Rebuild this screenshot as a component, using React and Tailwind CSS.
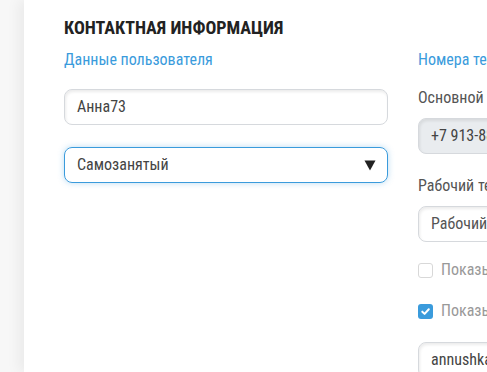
import React from 'react';

const font = { fontFamily: '"Roboto Condensed", Roboto, "Liberation Sans Narrow", sans-serif' };

const Field = ({ value, disabled, className = '' }) => (
  <div
    className={`h-9 w-[324px] shrink-0 rounded-lg border border-[#d6d9dd] px-3 flex items-center text-[16px] text-[#444] shadow-[inset_1px_2px_3px_rgba(0,0,0,0.08)] ${disabled ? 'bg-[#e9ecef]' : 'bg-white'} ${className}`}
  >
    <span className="whitespace-nowrap">{value}</span>
  </div>
);

const Check = ({ checked, label }) => (
  <label className="flex items-center gap-2 text-[16px] leading-5 text-[#999] whitespace-nowrap">
    {checked ? (
      <span className="w-[15px] h-[15px] rounded-[3px] bg-[#3a9bdc] flex items-center justify-center">
        <svg width="11" height="11" viewBox="0 0 12 12">
          <path d="M2.5 6.2 L5 8.6 L9.6 3.6" fill="none" stroke="white" strokeWidth="2.2" strokeLinecap="round" strokeLinejoin="round" />
        </svg>
      </span>
    ) : (
      <span className="w-[15px] h-[15px] rounded-[3px] border border-[#d8d8d8] bg-white" />
    )}
    {label}
  </label>
);

export default function App() {
  return (
    <div className="w-[487px] h-[372px] overflow-hidden bg-[#f7f7f7] flex" style={font}>
      <div className="flex-1 bg-white ml-6 shadow-[-6px_0_12px_rgba(0,0,0,0.05)] pl-10 pt-[18px]">
        <h2 className="text-[18px] leading-5 font-bold text-[#222] uppercase whitespace-nowrap">Контактная информация</h2>
        <div className="flex gap-[30px] mt-[12px]">
          <div className="flex flex-col w-[324px] shrink-0">
            <div className="text-[16px] text-[#3a9bdc] leading-5">Данные пользователя</div>
            <Field value="Анна73" className="mt-[19px]" />
            <div className="mt-[22px] h-9 w-[324px] rounded-lg border border-[#3a9bdc] px-3 flex items-center justify-between text-[16px] text-[#444] shadow-[0_0_6px_rgba(58,155,220,0.35)]">
              <span>Самозанятый</span>
              <svg width="12" height="12" viewBox="0 0 12 12" className="mr-[-1px]">
                <path d="M0.5 1.5 H11.5 L6 11.5 Z" fill="#222" />
              </svg>
            </div>
          </div>
          <div className="flex flex-col shrink-0">
            <div className="text-[16px] text-[#3a9bdc] leading-5 whitespace-nowrap">Номера телефонов</div>
            <div className="text-[16px] text-[#555] leading-5 mt-[18px] whitespace-nowrap">Основной телефон</div>
            <Field value="+7 913-888-88-88" disabled className="mt-[10px]" />
            <div className="text-[16px] text-[#555] leading-5 mt-[22px] whitespace-nowrap">Рабочий телефон</div>
            <Field value="Рабочий телефон" className="mt-[10px] text-[#555]" />
            <div className="mt-[18px]">
              <Check label="Показывать рабочий телефон" />
            </div>
            <div className="mt-[21px]">
              <Check checked label="Показывать email" />
            </div>
            <Field value="annushka73@mail.ru" className="mt-[21px]" />
          </div>
        </div>
      </div>
    </div>
  );
}
